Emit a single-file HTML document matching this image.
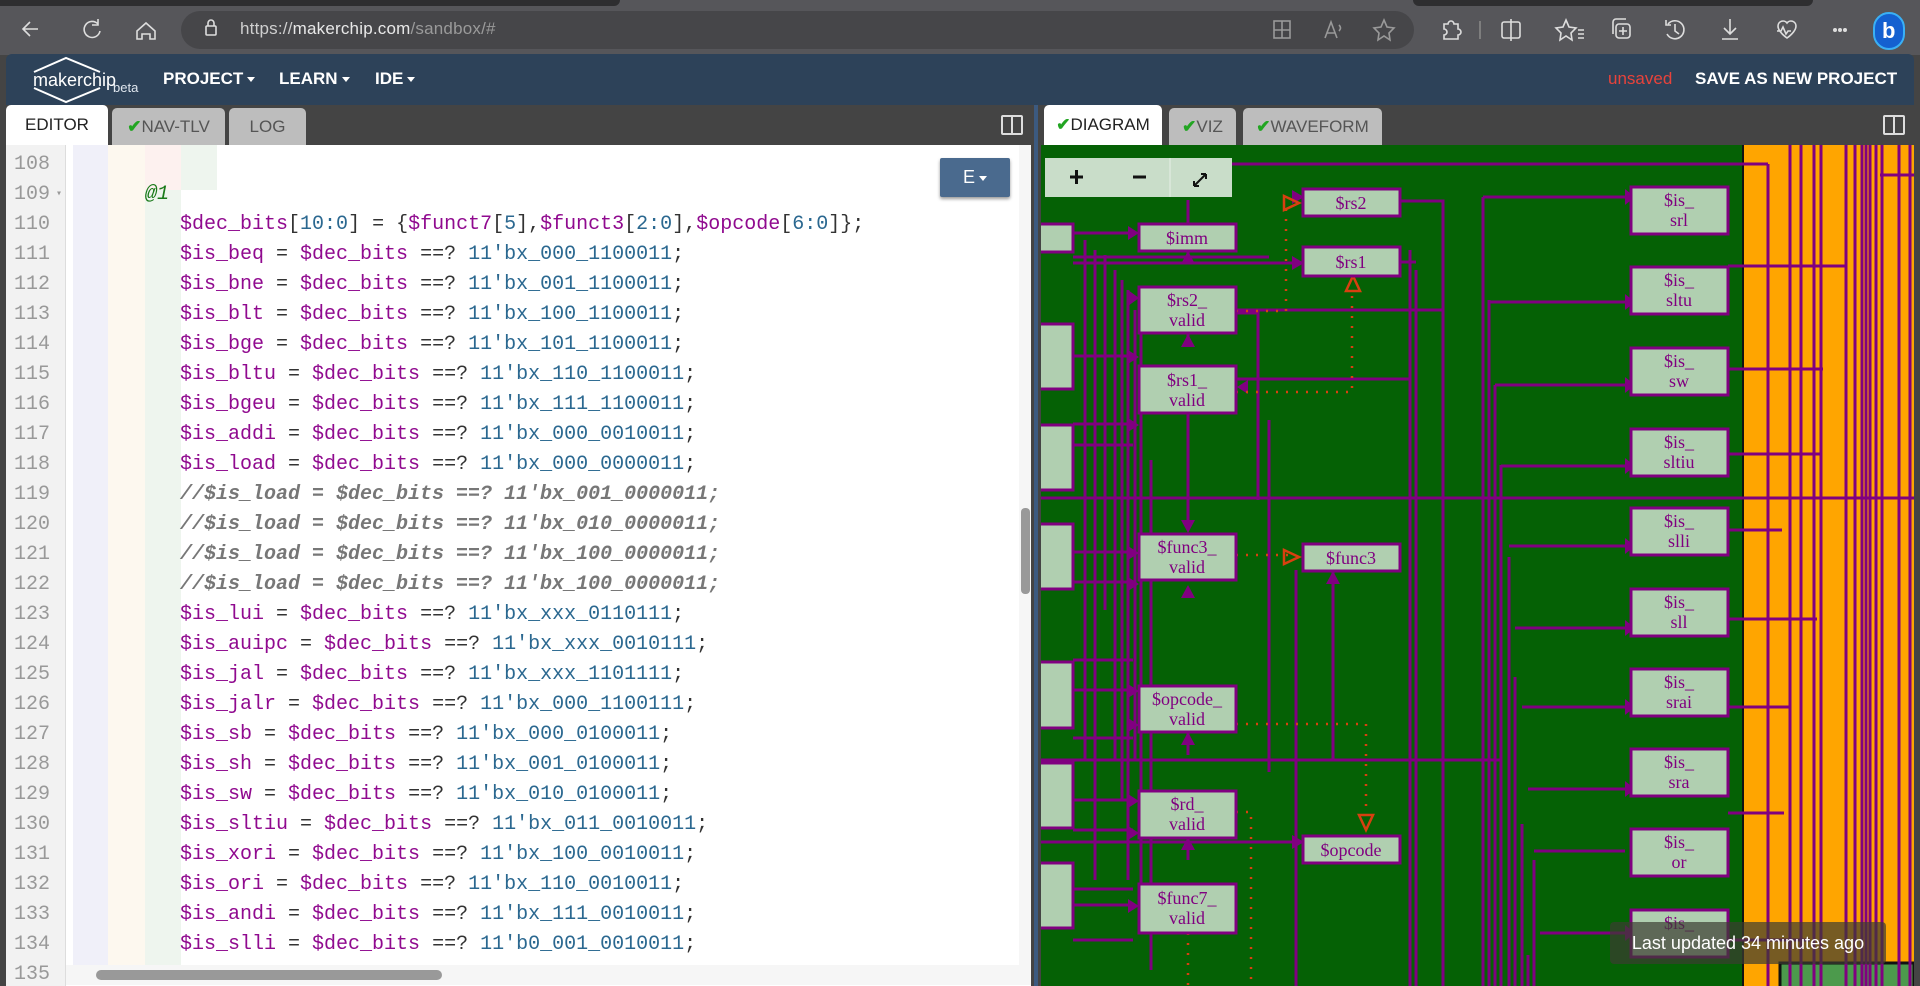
<!DOCTYPE html>
<html><head><meta charset="utf-8">
<style>
*{margin:0;padding:0;box-sizing:border-box}
body{width:1920px;height:986px;overflow:hidden;background:#444;font-family:"Liberation Sans",sans-serif;position:relative}
.abs{position:absolute}
#chrome{left:0;top:0;width:1920px;height:55px;background:#56565a}
#tabstrip{left:0;top:0;width:1920px;height:6px;background:#56565a}
#pill{left:181px;top:11px;width:1233px;height:38px;border-radius:19px;background:#464649}
.url{left:240px;top:19px;font-size:17px;color:#cfcfcf;letter-spacing:0.2px}
.url span{color:#9a9a9a}
#hdr{left:6px;top:54px;width:1908px;height:51px;background:#2d4259;border-radius:6px 6px 0 0}
.menu{top:69px;color:#fff;font-size:17px;font-weight:bold}
.tri{display:inline-block;width:0;height:0;border-left:4px solid transparent;border-right:4px solid transparent;border-top:5px solid #fff;vertical-align:middle;margin-left:4px}
.tab{top:108px;height:37px;border-radius:5px 5px 0 0;background:#bdbdbd;color:#555;font-size:17px;text-align:center;line-height:38px}
.tab.act{background:#fff;color:#222;top:105px;height:40px;line-height:40px}
.ck{color:#22a522;font-weight:bold}
#editor{left:6px;top:145px;width:1025px;height:841px;background:#fff;overflow:hidden}
.ln{position:absolute;left:0;width:60px;height:30px;line-height:30px;text-align:right;color:#999;font-family:"Liberation Mono",monospace;font-size:20px;padding-right:16px}
.code{position:absolute;height:30px;line-height:30px;font-family:"Liberation Mono",monospace;font-size:20px;color:#333;white-space:pre}
.v{color:#900a8f}.n{color:#2b6890}.c{color:#777;font-style:italic;font-weight:bold}
</style></head><body>
<div id="chrome" class="abs"></div>
<div class="abs" style="left:0;top:0;width:620px;height:6px;background:#2e2e30;border-radius:0 0 6px 0"></div>
<div class="abs" style="left:1413px;top:0;width:400px;height:6px;background:#2e2e30;border-radius:0 0 6px 6px"></div>
<div id="pill" class="abs"></div>
<svg class="abs" style="left:0;top:0" width="1920" height="55" fill="none" stroke="#ddd" stroke-width="1.6">
<path d="M38 29h-14M30 22l-7 7 7 7"/>
<path d="M98 24a8 8 0 1 0 2 7M98 19v6h-6"/>
<path d="M137 31l9-8 9 8v8h-5v-5h-8v5h-5z"/>
<rect x="206" y="26" width="10" height="9" rx="1"/><path d="M208 26v-3a3 3 0 0 1 6 0v3"/>
<g stroke="#999"><rect x="1274" y="21" width="16" height="17"/><path d="M1274 30h16M1282 21v17"/>
<path d="M1325 38l6-16 6 16M1327 33h8M1339 25q3 3 0 6"/>
<path d="M1384 20l3 7 7 1-5 5 1 7-6-4-6 4 1-7-5-5 7-1z"/></g>
<path d="M1444 24h4a3 3 0 0 1 6 0h4v5a3 3 0 0 1 0 6v4h-14v-4a3 3 0 0 0 0-6z"/>
<path d="M1480 21v18" stroke="#888"/>
<rect x="1502" y="22" width="18" height="16" rx="2"/><path d="M1511 19v22"/>
<path d="M1566 20l3 7 7 1-5 5 1 7-6-4-6 4 1-7-5-5 7-1zM1578 30h6M1578 34h6M1578 38h6"/>
<rect x="1616" y="24" width="14" height="14" rx="3"/><path d="M1613 34v-12a3 3 0 0 1 3-3h10M1623 27v8M1619 31h8"/>
<path d="M1668 24a9 9 0 1 1-1 10M1675 24v7l4 3M1666 20v5h5"/>
<path d="M1730 19v15M1724 28l6 6 6-6M1722 39h16"/>
<path d="M1778 26a5 5 0 0 1 9-3a5 5 0 0 1 9 3c0 6-9 12-9 12s-9-6-9-12zM1777 31h4l2-4 3 7 2-3h3"/>
<circle cx="1835" cy="30" r="1.2" fill="#ddd"/><circle cx="1840" cy="30" r="1.2" fill="#ddd"/><circle cx="1845" cy="30" r="1.2" fill="#ddd"/>
</svg>
<div class="abs" style="left:1873px;top:12px;width:32px;height:38px;border-radius:16px;background:#1460d0;border:2px solid #3ab0f5"></div>
<div class="abs" style="left:1882px;top:18px;color:#fff;font-weight:bold;font-size:22px">b</div>
<div class="abs url">https://<b style="font-weight:normal;color:#e8e8e8">makerchip.com</b><span>/sandbox/#</span></div>

<div id="hdr" class="abs"></div>
<svg class="abs" style="left:30px;top:56px" width="80" height="48" fill="none" stroke="#fff" stroke-width="2"><path d="M4 16L36 2L70 16M4 32L36 46L70 32"/></svg>
<div class="abs" style="left:33px;top:70px;color:#fff;font-size:18px">makerchip</div>
<div class="abs" style="left:113px;top:80px;color:#dfe6ee;font-size:13px">beta</div>
<div class="abs menu" style="left:163px">PROJECT<span class="tri"></span></div>
<div class="abs menu" style="left:279px">LEARN<span class="tri"></span></div>
<div class="abs menu" style="left:375px">IDE<span class="tri"></span></div>
<div class="abs" style="left:1608px;top:69px;color:#e8433b;font-size:17px">unsaved</div>
<div class="abs menu" style="left:1695px">SAVE AS NEW PROJECT</div>

<div class="abs tab act" style="left:6px;width:102px">EDITOR</div>
<div class="abs tab" style="left:112px;width:113px"><span class="ck">✔</span>NAV-TLV</div>
<div class="abs tab" style="left:229px;width:77px">LOG</div>
<div class="abs" style="left:1001px;top:115px;width:22px;height:20px;border:2px solid #ddd;border-radius:2px"><div style="position:absolute;left:8px;top:0;width:2px;height:16px;background:#ddd"></div></div>
<div class="abs tab act" style="left:1044px;width:118px;font-size:17px"><span class="ck">✔</span>DIAGRAM</div>
<div class="abs tab" style="left:1169px;width:67px"><span class="ck">✔</span>VIZ</div>
<div class="abs tab" style="left:1243px;width:139px"><span class="ck">✔</span>WAVEFORM</div>
<div class="abs" style="left:1883px;top:115px;width:22px;height:20px;border:2px solid #ddd;border-radius:2px"><div style="position:absolute;left:8px;top:0;width:2px;height:16px;background:#ddd"></div></div>
<div class="abs" style="left:1034px;top:105px;width:4px;height:881px;background:#3c5a80"></div>

<div id="editor" class="abs">
<div class="abs" style="left:0;top:0;width:60px;height:841px;background:#f2f2f2;border-right:1px solid #ddd"></div>
<div class="abs" style="left:67px;top:0;width:35px;height:830px;background:#f0f0f9"></div>
<div class="abs" style="left:102px;top:0;width:37px;height:830px;background:#fdf8ef"></div>
<div class="abs" style="left:139px;top:0;width:36px;height:45px;background:#fdf1ef"></div>
<div class="abs" style="left:139px;top:45px;width:36px;height:785px;background:#eef5ee"></div>
<div class="abs" style="left:175px;top:0;width:36px;height:45px;background:#eef5ee"></div>
<div class="abs" style="left:934px;top:13px;width:70px;height:39px;background:#4a6a8e;border-radius:2px;color:#fff;font-size:18px;line-height:39px;text-align:center;box-shadow:0 2px 3px #999">E<span class="tri"></span></div>
<div class="abs" style="left:1013px;top:0;width:12px;height:830px;background:#f6f6f6"></div>
<div class="abs" style="left:1015px;top:363px;width:9px;height:86px;background:#999;border-radius:4px"></div>
<div class="abs" style="left:60px;top:820px;width:965px;height:20px;background:#f6f6f6"></div>
<div class="abs" style="left:90px;top:825px;width:346px;height:10px;background:#999;border-radius:5px"></div>
<div id="lines"></div>
</div>

<svg class="abs" style="left:1041px;top:145px" width="873" height="841" viewBox="1041 145 873 841">
<rect x="1041" y="145" width="873" height="841" fill="#056105"/>
<rect x="1743" y="145" width="171" height="841" fill="#ffa500"/>
<line x1="1743" y1="145" x2="1743" y2="986" stroke="#111" stroke-width="2"/>
<rect x="1780" y="963" width="134" height="30" fill="#4c9a4c" stroke="#111" stroke-width="3"/>
<g stroke="#800080" stroke-width="3" fill="none">
<!-- orange verticals -->
<path d="M1768 164V986M1801 145V986M1814 145V986M1821 145V986M1846 145V986M1862 145V986M1866 145V986M1870 145V986M1876 145V986M1882 145V986M1899 145V986M1910 145V986M1790 145V986M1855 145V986"/>
<path d="M1232 164H1768M1041 498H1914M1880 175H1914M1728 266H1846M1728 369H1823M1728 454H1820M1728 530H1782M1728 619H1817M1728 813H1784M1728 940H1810M1728 707H1790"/>
<!-- bundle verticals -->
<path d="M1410 250V986M1416 270V986M1443 335V986M1483 197V986M1489 300V986M1495 385V986M1501 465V986M1509 557V986M1515 677V986M1522 824V986M1528 955V986M1534 860V986M1269 420V772M1296 570V986"/>
<path d="M1400 201H1443V335M1400 262H1416M1236 310H1443M1236 379H1410"/>
<!-- arrows to is_ nodes -->
<path d="M1483 197H1625M1489 302H1625M1495 385H1625M1501 466H1625M1509 546H1625M1515 628H1625M1522 707H1625M1528 789H1625M1534 851H1625M1540 933H1625"/>
<!-- left side wires -->
<path d="M1073 233H1133M1073 257H1269M1073 263H1295M1073 356H1133M1073 424H1133M1073 445H1133M1073 552H1133M1073 582H1133M1073 660H1133M1073 690H1133M1073 738H1133M1073 760H1500M1073 800H1133M1073 830H1133M1073 889H1133M1073 905H1133M1041 842H1295M1073 940H1133"/>
<path d="M1085 240V760M1095 250V880M1105 255V610M1115 270V760M1122 280V800M1128 290V880M1135 310V760M1141 330V905M1151 460V970"/>
<path d="M1188 200V224M1188 251V262M1188 333V345M1188 413V500H1188V530M1188 732V755M1188 838V860M1333 571V760H1041M1188 687V700M1258 360V500"/>
<path d="M1236 313H1258V360"/>
</g>
<g fill="#800080">
<path d="M1292 190l12 7-12 7zM1292 256l12 7-12 7zM1625 189l10 8-10 8zM1625 294l10 8-10 8zM1625 377l10 8-10 8zM1625 458l10 8-10 8zM1625 538l10 8-10 8zM1625 620l10 8-10 8zM1625 699l10 8-10 8zM1625 781l10 8-10 8zM1625 925l10 8-10 8zM1292 835l12 7-12 7z"/>
<path d="M1128 226l11 7-11 7zM1128 290l11 8-11 8zM1128 350l11 7-11 7zM1128 418l11 7-11 7zM1128 546l11 7-11 7zM1128 577l11 7-11 7zM1128 684l11 7-11 7zM1128 718l11 7-11 7zM1128 794l11 7-11 7zM1128 826l11 7-11 7zM1128 899l11 7-11 7z"/>
<path d="M1181 264l7-13 7 13zM1181 347l7-13 7 13zM1181 598l7-13 7 13zM1181 745l7-13 7 13zM1181 850l7-13 7 13zM1326 584l7-13 7 13zM1181 520l7 13 7-13zM1248 380l-11 7 11 7z"/>
</g>
<g fill="none" stroke="#d84010" stroke-width="2.5" stroke-dasharray="2 8">
<path d="M1236 311H1286V203M1236 392H1352V291M1236 555H1293M1236 724H1366V820M1236 812H1251V986M1188 933V986"/>
</g>
<g fill="none" stroke="#d84010" stroke-width="2.5"><path d="M1284 196l15 7-15 7zM1346 291l7-15 7 15zM1284 550l15 7-15 7zM1359 815l7 15 7-15z"/></g>
<g fill="#b0cfb0" stroke="#800080" stroke-width="3">
<rect x="1303" y="189" width="97" height="27"/><rect x="1303" y="247" width="97" height="29"/>
<rect x="1139" y="224" width="97" height="27"/><rect x="1139" y="287" width="97" height="46"/>
<rect x="1139" y="366" width="97" height="47"/><rect x="1139" y="534" width="97" height="46"/>
<rect x="1303" y="544" width="97" height="27"/><rect x="1139" y="686" width="97" height="46"/>
<rect x="1139" y="791" width="97" height="47"/><rect x="1139" y="884" width="97" height="49"/>
<rect x="1303" y="836" width="97" height="27"/>
<rect x="1031" y="224" width="42" height="28"/><rect x="1031" y="324" width="42" height="65"/><rect x="1031" y="425" width="42" height="65"/><rect x="1031" y="524" width="42" height="65"/><rect x="1031" y="662" width="42" height="66"/><rect x="1031" y="763" width="42" height="65"/><rect x="1031" y="863" width="42" height="65"/>
<rect x="1631" y="187" width="97" height="47"/><rect x="1631" y="267" width="97" height="47"/><rect x="1631" y="348" width="97" height="47"/><rect x="1631" y="429" width="97" height="47"/><rect x="1631" y="508" width="97" height="47"/><rect x="1631" y="589" width="97" height="47"/><rect x="1631" y="669" width="97" height="47"/><rect x="1631" y="749" width="97" height="47"/><rect x="1631" y="829" width="97" height="47"/><rect x="1631" y="910" width="97" height="47"/>
</g>
<g fill="#800080" font-family="Liberation Serif,serif" font-size="18" text-anchor="middle">
<text x="1351" y="209">$rs2</text><text x="1351" y="268">$rs1</text><text x="1187" y="244">$imm</text>
<text x="1187" y="306">$rs2_</text><text x="1187" y="326">valid</text>
<text x="1187" y="386">$rs1_</text><text x="1187" y="406">valid</text>
<text x="1187" y="553">$func3_</text><text x="1187" y="573">valid</text>
<text x="1351" y="564">$func3</text>
<text x="1187" y="705">$opcode_</text><text x="1187" y="725">valid</text>
<text x="1187" y="810">$rd_</text><text x="1187" y="830">valid</text>
<text x="1187" y="904">$func7_</text><text x="1187" y="924">valid</text>
<text x="1351" y="856">$opcode</text>
<text x="1679" y="206">$is_</text><text x="1679" y="226">srl</text>
<text x="1679" y="286">$is_</text><text x="1679" y="306">sltu</text>
<text x="1679" y="367">$is_</text><text x="1679" y="387">sw</text>
<text x="1679" y="448">$is_</text><text x="1679" y="468">sltiu</text>
<text x="1679" y="527">$is_</text><text x="1679" y="547">slli</text>
<text x="1679" y="608">$is_</text><text x="1679" y="628">sll</text>
<text x="1679" y="688">$is_</text><text x="1679" y="708">srai</text>
<text x="1679" y="768">$is_</text><text x="1679" y="788">sra</text>
<text x="1679" y="848">$is_</text><text x="1679" y="868">or</text>
<text x="1679" y="929">$is_</text>
</g>
<rect x="1045" y="158" width="187" height="39" fill="#c9ddc9"/>
<line x1="1170" y1="158" x2="1170" y2="197" stroke="#e6efe6"/>
<g stroke="#111" stroke-width="3"><path d="M1070 177h13M1076.5 170v14M1133 177h13"/><path d="M1194 186l12-12M1194 186v-5M1194 186h5M1206 174h-5M1206 174v5" stroke-width="2"/></g>
</svg>
<div class="abs" style="left:1610px;top:922px;width:276px;height:42px;background:rgba(60,60,50,0.7);border-radius:4px;color:#fff;font-size:18px;line-height:42px;text-align:center">Last updated 34 minutes ago</div>

<script>
var L={108:"",109:'<span style="color:#1a7a1a;font-style:italic">@1</span>',
110:'<span class="v">$dec_bits</span>[<span class="n">10:0</span>] = {<span class="v">$funct7</span>[<span class="n">5</span>],<span class="v">$funct3</span>[<span class="n">2:0</span>],<span class="v">$opcode</span>[<span class="n">6:0</span>]};'};
var d=[[111,"beq","000_1100011"],[112,"bne","001_1100011"],[113,"blt","100_1100011"],[114,"bge","101_1100011"],[115,"bltu","110_1100011"],[116,"bgeu","111_1100011"],[117,"addi","000_0010011"],[118,"load","000_0000011"],[123,"lui","xxx_0110111"],[124,"auipc","xxx_0010111"],[125,"jal","xxx_1101111"],[126,"jalr","000_1100111"],[127,"sb","000_0100011"],[128,"sh","001_0100011"],[129,"sw","010_0100011"],[130,"sltiu","011_0010011"],[131,"xori","100_0010011"],[132,"ori","110_0010011"],[133,"andi","111_0010011"]];
d.forEach(function(a){L[a[0]]='<span class="v">$is_'+a[1]+'</span> = <span class="v">$dec_bits</span> ==? <span class="n">11\'bx_'+a[2]+'</span>;'});
L[134]='<span class="v">$is_slli</span> = <span class="v">$dec_bits</span> ==? <span class="n">11\'b0_001_0010011</span>;';
[[119,"001"],[120,"010"],[121,"100"],[122,"100"]].forEach(function(a){L[a[0]]='<span class="c">//$is_load = $dec_bits ==? 11\'bx_'+a[1]+'_0000011;</span>'});
var h="";
for(var i=108;i<=135;i++){var t=(i-108)*30+5;h+='<div class="ln" style="top:'+t+'px">'+i+(i==109?'<span style="position:absolute;right:4px;font-size:10px">▾</span>':'')+'</div>';
if(L[i]!==undefined)h+='<div class="code" style="top:'+t+'px;left:'+(i==109?139:174)+'px">'+L[i]+'</div>';}
document.getElementById("lines").innerHTML=h;
</script>
</body></html>
